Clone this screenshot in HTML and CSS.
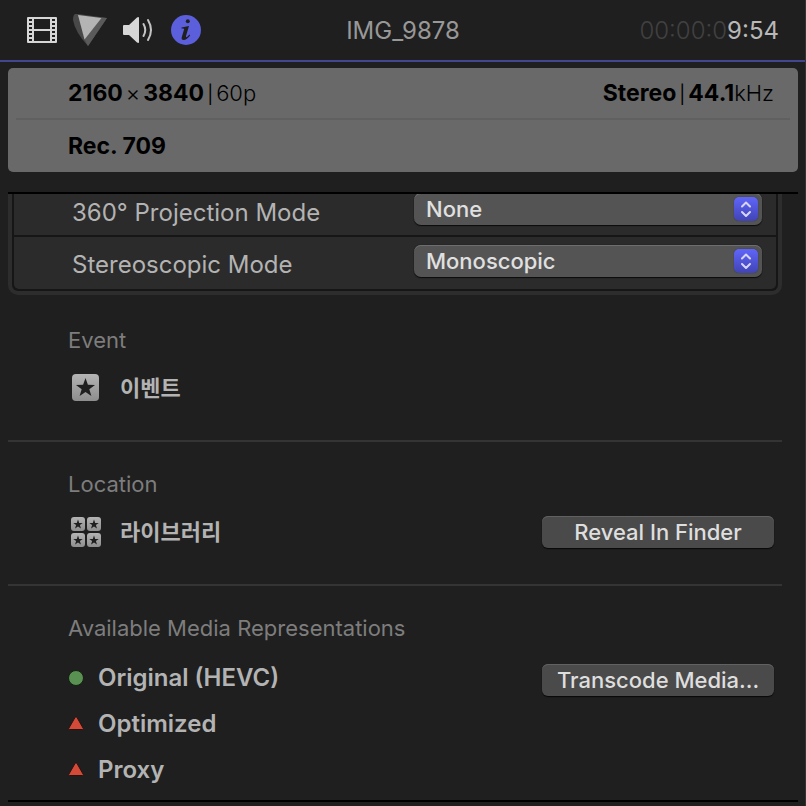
FILE: index.html
```html
<!DOCTYPE html>
<html lang="en">
<head>
    <meta charset="UTF-8">
    <meta name="viewport" content="width=device-width, initial-scale=1.0">
    <title>Info Inspector</title>
    <link rel="stylesheet" href="styles.css">
</head>
<body>
    <header class="toolbar">
        <nav class="tabs">
            <button class="tab" aria-label="Video">
                <svg width="30" height="26" viewBox="0 0 30 26">
                    <path fill="#d6d6d6" fill-rule="evenodd" d="M1 0H29Q30 0 30 1V25Q30 26 29 26H1Q0 26 0 25V1Q0 0 1 0Z M2 2v2h3v-2z M2 6v2h3v-2z M2 10v2h3v-2z M2 14v2h3v-2z M2 18v2h3v-2z M2 22v2h3v-2z M25 2v2h3v-2z M25 6v2h3v-2z M25 10v2h3v-2z M25 14v2h3v-2z M25 18v2h3v-2z M25 22v2h3v-2z M7 2v10h16v-10z M7 14v10h16v-10z"/>
                </svg>
            </button>
            <button class="tab" aria-label="Color">
                <svg width="34" height="32" viewBox="0 0 34 32">
                    <path fill="#484848" d="M5 0 L2 0 Q0 1 0 6 Q2 18 15 32 L34 4 Z"/>
                    <path fill="#5a5a5a" d="M28 3.500L34 4L15 32L11 24.500Z"/>
                    <path fill="#b4b4b4" d="M5 1L28.500 4L11.500 25.500Z"/>
                </svg>
            </button>
            <button class="tab" aria-label="Audio">
                <svg width="32" height="26" viewBox="0 0 32 26">
                    <path fill="#d6d6d6" d="M0 9Q0 8 1 8H6L14 .5Q16-.5 16 1V25Q16 26.500 14 25.500L6 18H1Q0 18 0 17Z"/>
                    <path fill="none" stroke="#c4c4c4" stroke-width="2" stroke-linecap="round" d="M20.500 7Q24 13 20.500 19M25 3Q31 13 25 23"/>
                </svg>
            </button>
            <button class="tab" aria-label="Info">
                <svg width="30" height="30" viewBox="0 0 30 30">
                    <circle cx="15" cy="15" r="15" fill="#5b5fdc"/>
                    <circle cx="16.800" cy="6.200" r="2" fill="#1f1f1f"/>
                    <path fill="#1f1f1f" d="M10.500 12.500L18 11L15 21Q14.700 22.500 16 22L18.500 19.500L19.200 20.200Q16 25 12.500 25Q10 24.800 10.800 22L13.200 14Q13.300 13.200 10.500 13.500Z"/>
                </svg>
            </button>
        </nav>
        <h1 class="clip-name">IMG_9878</h1>
        <div class="timecode"><span class="dim">00:00:0</span>9:54</div>
    </header>

    <section class="summary">
        <div class="summary-row">
            <div class="format"><b>2160</b><span class="times">×</span><b>3840</b><span class="bar">|</span>60p</div>
            <div class="format"><b>Stereo</b><span class="bar">|</span><b>44.1</b>kHz</div>
        </div>
        <div class="summary-row"><b>Rec. 709</b></div>
    </section>

    <main class="pane">
        <div class="settings">
            <div class="setting">
                <label for="projection">360° Projection Mode</label>
                <div class="popup">
                    <select id="projection"><option>None</option></select>
                    <svg class="popup-arrows" width="24" height="24" viewBox="0 0 24 24"><path d="M8 9.500L12 5.500L16 9.500M8 15L12 19L16 15"/></svg>
                </div>
            </div>
            <div class="setting">
                <label for="stereo">Stereoscopic Mode</label>
                <div class="popup">
                    <select id="stereo"><option>Monoscopic</option></select>
                    <svg class="popup-arrows" width="24" height="24" viewBox="0 0 24 24"><path d="M8 9.500L12 5.500L16 9.500M8 15L12 19L16 15"/></svg>
                </div>
            </div>
        </div>

        <section class="group">
            <h2>Event</h2>
            <div class="row">
                <svg class="row-icon" width="30" height="30" viewBox="0 0 30 30">
                    <defs>
                        <linearGradient id="silver" x1="0" y1="0" x2="0" y2="1">
                            <stop offset="0" stop-color="#b4b4b4"/>
                            <stop offset="1" stop-color="#8e8e8e"/>
                        </linearGradient>
                        <path id="star" d="M0 -10L2.400 -3.200L9.500 -3.100L3.800 1.200L5.900 8.100L0 4L-5.900 8.100L-3.800 1.200L-9.500 -3.100L-2.400 -3.200Z"/>
                    </defs>
                    <rect x="1" y="1" width="27" height="27" rx="4" fill="url(#silver)"/>
                    <use href="#star" x="14.500" y="15" fill="#1f1f1f"/>
                </svg>
                <span class="korean" lang="ko">이벤트</span>
            </div>
        </section>

        <section class="group">
            <h2>Location</h2>
            <div class="row">
                <svg class="row-icon" width="30" height="30" viewBox="0 0 30 30">
                    <g fill="url(#silver)">
                        <rect width="14" height="14" rx="3"/>
                        <rect x="16" width="14" height="14" rx="3"/>
                        <rect y="16" width="14" height="14" rx="3"/>
                        <rect x="16" y="16" width="14" height="14" rx="3"/>
                    </g>
                    <g fill="#1f1f1f">
                        <use href="#star" transform="translate(7 7.500) scale(.5)"/>
                        <use href="#star" transform="translate(23 7.500) scale(.5)"/>
                        <use href="#star" transform="translate(7 23.500) scale(.5)"/>
                        <use href="#star" transform="translate(23 23.500) scale(.5)"/>
                    </g>
                </svg>
                <span class="korean" lang="ko">라이브러리</span>
                <button class="push">Reveal In Finder</button>
            </div>
        </section>

        <section class="group">
            <h2>Available Media Representations</h2>
            <ul class="media">
                <li>
                    <svg width="16" height="16" viewBox="0 0 16 16"><circle cx="8" cy="8" r="7.500" fill="#589151" stroke="#142012"/></svg>
                    Original (HEVC)
                    <button class="push">Transcode Media...</button>
                </li>
                <li>
                    <svg width="16" height="16" viewBox="0 0 16 16"><path fill="#d34b38" stroke="#2b1210" d="M8 1Q8.700 1 9 1.500L15.300 12.500Q15.500 13.500 14.500 13.500H1.500Q.5 13.500 .7 12.500L7 1.500Q7.300 1 8 1Z"/></svg>
                    Optimized
                </li>
                <li>
                    <svg width="16" height="16" viewBox="0 0 16 16"><path fill="#d34b38" stroke="#2b1210" d="M8 1Q8.700 1 9 1.500L15.300 12.500Q15.500 13.500 14.500 13.500H1.500Q.5 13.500 .7 12.500L7 1.500Q7.300 1 8 1Z"/></svg>
                    Proxy
                </li>
            </ul>
        </section>
    </main>
</body>
</html>
```
FILE: styles.css
```css
* {
    box-sizing: border-box;
}

body {
    margin: 0;
    min-height: 100vh;
    display: flex;
    flex-direction: column;
    background: #1f1f1f;
    border-right: 1px solid #343434;
    color: #b3b3b3;
    font-family: Inter, "Noto Sans CJK KR", sans-serif;
    font-size: 22px;
    line-height: 28px;
}

button, select {
    font: inherit;
    border: none;
    margin: 0;
}

h1, h2, ul {
    margin: 0;
    padding: 0;
    font-size: inherit;
    font-weight: 400;
    list-style: none;
}

svg {
    display: block;
    flex: none;
}

/* Toolbar */
.toolbar {
    display: grid;
    grid-template-columns: 1fr auto 1fr;
    align-items: center;
    height: 62px;
    padding: 0 26px 0 27px;
    border-bottom: 2px solid #43468f;
    font-size: 24px;
}

.tabs {
    display: flex;
    align-items: center;
    gap: 16px;
}

.tab {
    padding: 0;
    background: none;
}

.clip-name, .timecode {
    padding-top: 2px;
}

.clip-name {
    color: #989898;
}

.timecode {
    color: #b8b8b8;
    text-align: right;
}

.dim {
    color: #414141;
    font-weight: 300;
}

/* Format summary */
.summary {
    margin: 6px 7px 20px 8px;
    padding: 0 8px;
    background: #696969;
    border-radius: 5px;
    color: #000;
}

.summary-row {
    display: flex;
    justify-content: space-between;
    align-items: center;
    height: 50px;
    padding: 2px 16px 0 52px;
}

.summary-row + .summary-row {
    height: 54px;
    padding-top: 0;
    border-top: 2px solid #606060;
}

.format {
    font-weight: 300;
}

.summary b {
    font-size: 23px;
    font-weight: 700;
}

.times {
    margin: 0 3px;
}

.bar {
    margin: 0 3px;
    font-size: 18px;
    font-weight: 400;
}

/* Scrolling pane */
.pane {
    flex: 1;
    margin: 0 7px 4px 8px;
    padding-right: 16px;
    border-top: 2px solid #000;
    border-bottom: 2px solid #000;
    overflow: hidden;
}

/* first row is partly scrolled out of view */
.settings {
    margin: -9px 0 3px;
    border: 4px solid #2d2d2d;
    border-top: none;
    border-radius: 0 0 10px 10px;
    background: #161616;
    padding: 0 2px 2px;
}

.setting {
    display: flex;
    justify-content: space-between;
    align-items: flex-start;
    height: 50px;
    padding: 0 14px 0 58px;
    background: #2b2b2b;
    font-size: 24px;
}

.setting + .setting {
    height: 52px;
    margin-top: 2px;
    border-radius: 0 0 5px 5px;
}

.setting label {
    margin-top: 14px;
}

.popup {
    position: relative;
    width: 348px;
    margin-top: 8px;
    font-size: 22px;
}

.popup select {
    display: block;
    appearance: none;
    width: 100%;
    height: 32px;
    padding: 0 40px 0 12px;
    border-radius: 7px;
    background: #545454;
    box-shadow: inset 0 1px #6e6e6e, 0 1px 1px #0c0c0c, 0 0 1px #0c0c0c;
    color: #e0e0e0;
    font-weight: 500;
}

.popup-arrows {
    position: absolute;
    top: 4px;
    right: 4px;
    border-radius: 5px;
    background: linear-gradient(#6065fa, #4044b4);
    box-shadow: 0 0 1px #222;
    fill: none;
    stroke: #d6d6f4;
    stroke-width: 2;
    stroke-linecap: round;
    stroke-linejoin: round;
    pointer-events: none;
}

/* Sections */
.group {
    padding: 28px 8px 32px 60px;
}

.group + .group {
    border-top: 2px solid #343434;
}

.group:last-child {
    padding-bottom: 6px;
}

.group h2 {
    margin-bottom: 14px;
    color: #7d7d7d;
}

.row {
    display: flex;
    align-items: center;
    height: 40px;
}

.row-icon {
    margin: 0 19px 0 3px;
}

.korean {
    padding-bottom: 5px;
    font-family: "Noto Sans CJK KR", sans-serif;
    font-weight: 700;
}

.push {
    width: 232px;
    height: 32px;
    margin-left: auto;
    padding: 0;
    border-radius: 6px;
    background: #4a4a4a;
    box-shadow: inset 0 1px #616161, 0 1px 1px #080808;
    color: #dedede;
    font-size: 22px;
    font-weight: 500;
}

.media li {
    display: flex;
    align-items: center;
    gap: 14px;
    height: 46px;
    padding-bottom: 2px;
    font-size: 24px;
    font-weight: 600;
}

.media .push {
    margin-top: 4px;
}
```
